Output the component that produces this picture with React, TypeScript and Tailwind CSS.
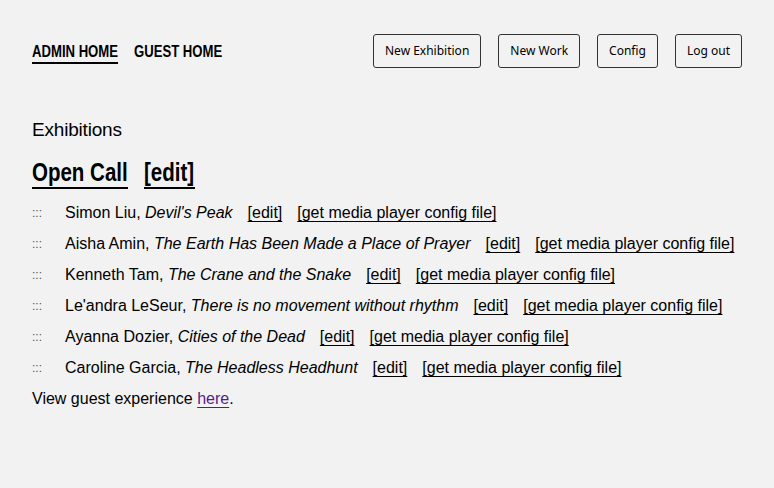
const works = [
  { artist: 'Simon Liu', title: "Devil's Peak" },
  { artist: 'Aisha Amin', title: 'The Earth Has Been Made a Place of Prayer' },
  { artist: 'Kenneth Tam', title: 'The Crane and the Snake' },
  { artist: "Le'andra LeSeur", title: 'There is no movement without rhythm' },
  { artist: 'Ayanna Dozier', title: 'Cities of the Dead' },
  { artist: 'Caroline Garcia', title: 'The Headless Headhunt' },
];

const buttons = ['New Exhibition', 'New Work', 'Config', 'Log out'];

const link = 'underline underline-offset-[3px] [text-decoration-skip-ink:none]';

export default function App() {
  return (
    <div className="min-h-[488px] bg-[#f2f2f2] px-8 pt-[34px] text-black font-['Liberation_Sans',Arial,sans-serif]">
      <header className="flex items-center justify-between">
        <nav className="mt-[4px] flex gap-4 text-[16px] font-bold leading-[20px]">
          <a href="#" className="block w-[86px] whitespace-nowrap border-b-2 border-black">
            <span className="inline-block origin-left scale-x-[0.82]">ADMIN HOME</span>
          </a>
          <a href="#" className="block w-[88px] whitespace-nowrap border-b-2 border-transparent">
            <span className="inline-block origin-left scale-x-[0.82]">GUEST HOME</span>
          </a>
        </nav>
        <div className="flex gap-[17px] font-['Noto_Sans',sans-serif] text-[12px]">
          {buttons.map((b) => (
            <button
              key={b}
              type="button"
              className="h-[34px] rounded-[3px] border border-[#333] bg-[#f2f2f2] px-[11px]"
            >
              {b}
            </button>
          ))}
        </div>
      </header>

      <main className="mt-[50px]">
        <h2 className="text-[19px] leading-[24px] font-medium tracking-[-0.2px]">Exhibitions</h2>
        <h3 className="mt-[15px] flex gap-4 text-[25px] font-bold leading-[30px]">
          <a href="#" className="block w-[96px] whitespace-nowrap border-b-2 border-black">
            <span className="inline-block origin-left scale-x-[0.82]">Open Call</span>
          </a>
          <a href="#" className="block w-[51px] whitespace-nowrap border-b-2 border-black">
            <span className="inline-block origin-left scale-x-[0.82]">[edit]</span>
          </a>
        </h3>
        <ul className="mt-[8px] text-[16px]">
          {works.map((w) => (
            <li key={w.artist} className="flex h-[31px] items-center">
              <span className="w-[33px] text-[12px] text-[#555]">:::</span>
              <span>
                {w.artist}, <em>{w.title}</em>
              </span>
              <a href="#" className={`ml-[15px] ${link}`}>[edit]</a>
              <a href="#" className={`ml-[15px] ${link}`}>[get media player config file]</a>
            </li>
          ))}
        </ul>
        <p className="text-[16px] leading-[31px]">
          View guest experience{' '}
          <a href="#" className={`text-[#551a8b] ${link}`}>here</a>.
        </p>
      </main>
    </div>
  );
}
